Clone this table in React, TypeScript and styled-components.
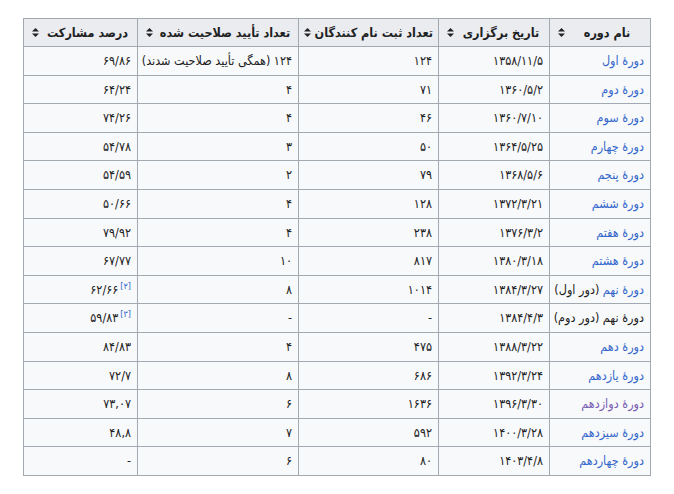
import type { FC } from "react";
import styled, { createGlobalStyle } from "styled-components";

const GlobalStyle = createGlobalStyle`
  body {
    margin: 0;
    background: #ffffff;
    font-family: "DejaVu Sans Condensed", "DejaVu Sans", sans-serif;
  }
`;

const Page = styled.div`
  direction: rtl;
  padding: 18px 23px 0 24px;
  width: 674px;
  box-sizing: border-box;
`;

const Table = styled.table`
  width: 627px;
  table-layout: fixed;
  border-collapse: collapse;
  background: #f8f9fa;
  color: #202122;
  border: 1px solid #a2a9b1;
  font-size: 12.5px;
`;

const Th = styled.th`
  background: #eaecf0;
  border: 1px solid #a2a9b1;
  padding: 3px 5px 3px 8px;
  line-height: 21px;
  font-weight: bold;
  white-space: nowrap;
`;

const HeadInner = styled.div`
  display: grid;
  grid-template-columns: 1fr auto;
  align-items: center;
  gap: 4px;
`;

const HeadText = styled.span`
  text-align: center;
`;

const Td = styled.td`
  border: 1px solid #a2a9b1;
  padding: 3px 6px;
  line-height: 21.6px;
  text-align: right;
  white-space: nowrap;
`;

const Link = styled.span<{ $visited?: boolean }>`
  color: ${(p) => (p.$visited ? "#795cb2" : "#3366cc")};
`;

const Ref = styled.sup`
  color: #3366cc;
  font-size: 9px;
  line-height: 1;
  margin-left: 2px;
`;

const SortIcon: FC = () => (
  <svg width="7" height="9" viewBox="0 0 7 9">
    <path d="M3.5 0 L7 3.6 L0 3.6 Z" fill="#202122" />
    <path d="M3.5 9 L7 5.4 L0 5.4 Z" fill="#202122" />
  </svg>
);

const HeadCell: FC<{ label: string }> = ({ label }) => (
  <Th>
    <HeadInner>
      <HeadText>{label}</HeadText>
      <SortIcon />
    </HeadInner>
  </Th>
);

interface Row {
  name: string;
  tail?: string;
  link?: boolean;
  visited?: boolean;
  date: string;
  registered: string;
  approved: string;
  percent: string;
  refNo?: string;
}

const rows: Row[] = [
  { name: "دورهٔ اول", link: true, date: "۱۳۵۸/۱۱/۵", registered: "۱۲۴", approved: "۱۲۴ (همگی تأیید صلاحیت شدند)", percent: "۶۹/۸۶" },
  { name: "دورهٔ دوم", link: true, date: "۱۳۶۰/۵/۲", registered: "۷۱", approved: "۴", percent: "۶۴/۲۴" },
  { name: "دورهٔ سوم", link: true, date: "۱۳۶۰/۷/۱۰", registered: "۴۶", approved: "۴", percent: "۷۴/۲۶" },
  { name: "دورهٔ چهارم", link: true, date: "۱۳۶۴/۵/۲۵", registered: "۵۰", approved: "۳", percent: "۵۴/۷۸" },
  { name: "دورهٔ پنجم", link: true, date: "۱۳۶۸/۵/۶", registered: "۷۹", approved: "۲", percent: "۵۴/۵۹" },
  { name: "دورهٔ ششم", link: true, date: "۱۳۷۲/۳/۲۱", registered: "۱۲۸", approved: "۴", percent: "۵۰/۶۶" },
  { name: "دورهٔ هفتم", link: true, date: "۱۳۷۶/۳/۲", registered: "۲۳۸", approved: "۴", percent: "۷۹/۹۲" },
  { name: "دورهٔ هشتم", link: true, date: "۱۳۸۰/۳/۱۸", registered: "۸۱۷", approved: "۱۰", percent: "۶۷/۷۷" },
  { name: "دورهٔ نهم", tail: " (دور اول)", link: true, date: "۱۳۸۴/۳/۲۷", registered: "۱۰۱۴", approved: "۸", percent: "۶۲/۶۶", refNo: "[۲]" },
  { name: "دورهٔ نهم (دور دوم)", date: "۱۳۸۴/۴/۳", registered: "-", approved: "-", percent: "۵۹/۸۳", refNo: "[۳]" },
  { name: "دورهٔ دهم", link: true, date: "۱۳۸۸/۳/۲۲", registered: "۴۷۵", approved: "۴", percent: "۸۴/۸۳" },
  { name: "دورهٔ یازدهم", link: true, date: "۱۳۹۲/۳/۲۴", registered: "۶۸۶", approved: "۸", percent: "۷۲/۷" },
  { name: "دورهٔ دوازدهم", link: true, visited: true, date: "۱۳۹۶/۳/۳۰", registered: "۱۶۳۶", approved: "۶", percent: "۷۳,۰۷" },
  { name: "دورهٔ سیزدهم", link: true, date: "۱۴۰۰/۳/۲۸", registered: "۵۹۲", approved: "۷", percent: "۴۸,۸" },
  { name: "دورهٔ چهاردهم", link: true, date: "۱۴۰۳/۴/۸", registered: "۸۰", approved: "۶", percent: "-" },
];

const App: FC = () => (
  <Page>
    <GlobalStyle />
    <Table>
      <colgroup>
        <col style={{ width: 101 }} />
        <col style={{ width: 111 }} />
        <col style={{ width: 140 }} />
        <col style={{ width: 161 }} />
        <col style={{ width: 114 }} />
      </colgroup>
      <thead>
        <tr>
          <HeadCell label="نام دوره" />
          <HeadCell label="تاریخ برگزاری" />
          <HeadCell label="تعداد ثبت نام کنندگان" />
          <HeadCell label="تعداد تأیید صلاحیت شده" />
          <HeadCell label="درصد مشارکت" />
        </tr>
      </thead>
      <tbody>
        {rows.map((r) => (
          <tr key={r.name + r.date}>
            <Td>
              {r.link ? <Link $visited={r.visited}>{r.name}</Link> : r.name}
              {r.tail}
            </Td>
            <Td>{r.date}</Td>
            <Td>{r.registered}</Td>
            <Td>{r.approved}</Td>
            <Td>
              {r.refNo && <Ref>{r.refNo}</Ref>}
              {r.percent}
            </Td>
          </tr>
        ))}
      </tbody>
    </Table>
  </Page>
);

export default App;
